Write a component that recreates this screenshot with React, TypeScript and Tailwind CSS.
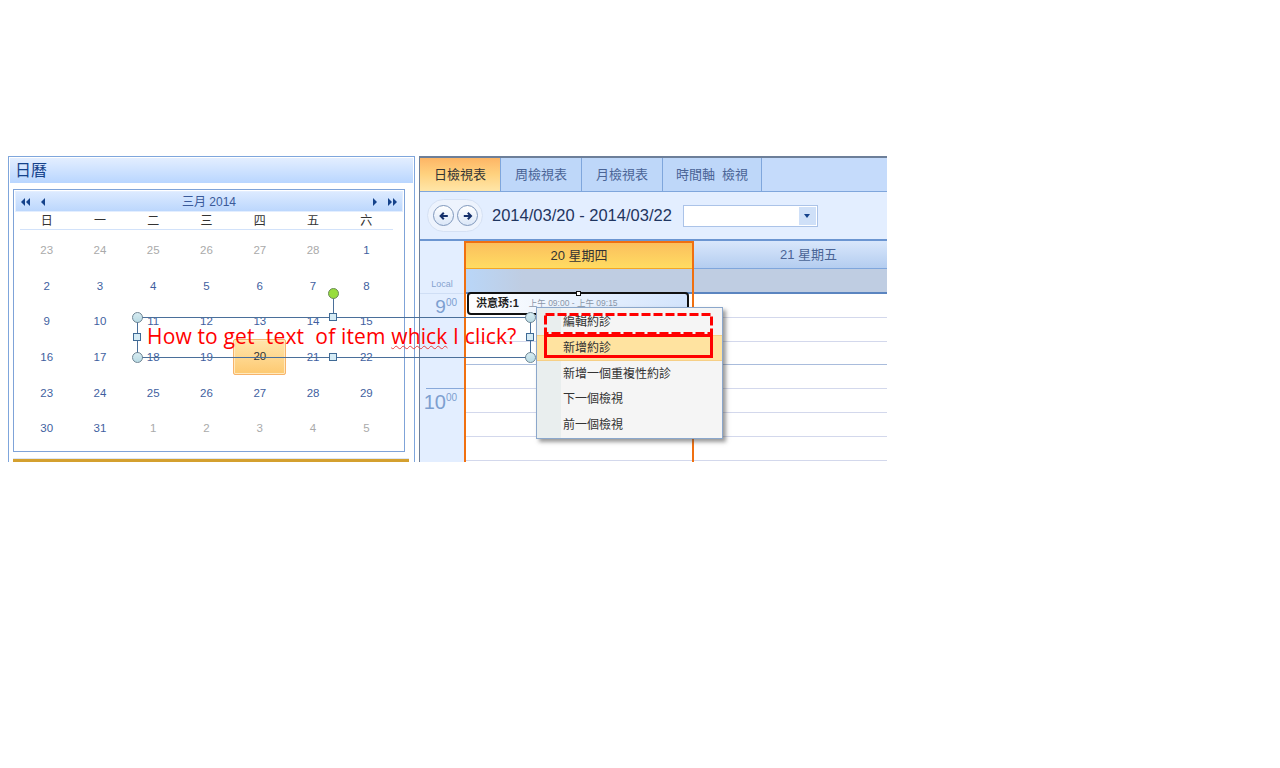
const FONT = "[font-family:'Liberation_Sans','Noto_Sans_CJK_TC',sans-serif]";

const WEEKDAYS = ["日", "一", "二", "三", "四", "五", "六"];

// day, muted
const DAYS: [number, boolean][] = [
  [23, true], [24, true], [25, true], [26, true], [27, true], [28, true], [1, false],
  [2, false], [3, false], [4, false], [5, false], [6, false], [7, false], [8, false],
  [9, false], [10, false], [11, false], [12, false], [13, false], [14, false], [15, false],
  [16, false], [17, false], [18, false], [19, false], [20, false], [21, false], [22, false],
  [23, false], [24, false], [25, false], [26, false], [27, false], [28, false], [29, false],
  [30, false], [31, false], [1, true], [2, true], [3, true], [4, true], [5, true],
];

const MENU = ["編輯約診", "新增約診", "新增一個重複性約診", "下一個檢視", "前一個檢視"];

const TABS = [
  { label: "周檢視表", width: "w-[81px]" },
  { label: "月檢視表", width: "w-[81px]" },
  { label: "時間軸  檢視", width: "w-[99px]" },
];

function Tri({ dir, double }: { dir: "l" | "r"; double?: boolean }) {
  const one = dir === "l" ? "M5 0 L5 8 L1 4 Z" : "M1 0 L1 8 L5 4 Z";
  const two = dir === "l" ? "M10 0 L10 8 L6 4 Z" : "M6 0 L6 8 L10 4 Z";
  return (
    <svg width={double ? 11 : 6} height="8" viewBox={double ? "0 0 11 8" : "0 0 6 8"} fill="#15428b">
      <path d={one} />
      {double && <path d={two} />}
    </svg>
  );
}

function Calendar() {
  return (
    <div className="w-[407px] h-full shrink-0 border border-[#7fa6dc] border-b-0 flex flex-col">
      <div className="h-[29px] border-b-2 border-[#8fb3e6] border border-white bg-gradient-to-b from-[#e3eeff] to-[#b9d6ff] flex items-center pl-[5px] pt-[1px] text-[16px] text-[#15428b]">
        日曆
      </div>
      <div className="flex-1 px-[4px] pt-[4px] flex flex-col">
        <div className="h-[263px] w-[392px] border border-[#7fa3d8] px-[1px] pt-[1px] flex flex-col">
          <div className="h-[21px] shrink-0 border border-[#e3eeff] bg-gradient-to-b from-[#dceaff] to-[#bcd7fd] flex items-center justify-between px-[4px] text-[12px] text-[#3a5a9a]">
            <div className="flex items-center gap-[9px]">
              <Tri dir="l" double />
              <Tri dir="l" />
            </div>
            <span>三月 2014</span>
            <div className="flex items-center gap-[9px]">
              <Tri dir="r" />
              <Tri dir="r" double />
            </div>
          </div>
          <div className="ml-[5px] w-[373px] grid grid-cols-7 h-[18px] pt-[1px] border-b border-[#d2e2fa] items-center text-center text-[12px] leading-none text-[#333333]">
            {WEEKDAYS.map((d) => (
              <span key={d}>{d}</span>
            ))}
          </div>
          <div className="ml-[5px] w-[373px] grid grid-cols-7 auto-rows-[35.6px] pt-[3px] text-[11.5px] text-center">
            {DAYS.map(([d, muted], i) => {
              const today = i === 25;
              return (
                <div key={i} className="flex items-center justify-center">
                  {today ? (
                    <div className="w-[53px] h-[36px] -mt-[1px] flex items-center justify-center rounded-[2px] border border-[#f7b36a] bg-gradient-to-b from-[#ffe6ad] to-[#fdc970] text-[#333333] shadow-[inset_0_0_0_1px_#ffe9bd]">
                      {d}
                    </div>
                  ) : (
                    <span className={muted ? "text-[#aaaaaa]" : "text-[#3f5f9f]"}>{d}</span>
                  )}
                </div>
              );
            })}
          </div>
        </div>
        <div className="mt-[6px] h-[4px] w-[396px] border-t border-[#dce6f4] bg-[#d4a02f]" />
      </div>
    </div>
  );
}

function ContextMenu() {
  return (
    <div className="absolute left-[116px] top-[149px] w-[187px] h-[132px] border border-[#8ba7cb] bg-[#f5f5f5] shadow-[3px_3px_4px_rgba(70,70,70,0.55)] flex flex-col pt-[1px]">
      <div className="absolute left-0 top-0 bottom-0 w-[24px] bg-[#e9eeee]" />
      {MENU.map((item, i) => (
        <div
          key={item}
          className={`relative h-[26px] pl-[26px] flex items-center text-[12px] text-[#333333] ${
            i === 1 ? "bg-[#ffe3a0] border-y border-[#f6cf86]" : ""
          }`}
        >
          {item}
        </div>
      ))}
    </div>
  );
}

function GridLines() {
  return (
    <>
      {Array.from({ length: 7 }, (_, i) => (
        <div
          key={i}
          className={`h-[23.8px] shrink-0 bg-white border-b ${i === 2 ? "border-[#a9bcdc]" : "border-[#d3d8ec]"}`}
        />
      ))}
    </>
  );
}

function Scheduler() {
  return (
    <div className="relative ml-[4px] w-[468px] h-full shrink-0 border-l border-t-2 border-[#6d7f99] flex flex-col overflow-hidden">
      {/* tabs */}
      <div className="h-[34px] shrink-0 flex bg-[#c5dbfb] border-b border-[#7fa6dc]">
        <div className="w-[81px] border-r border-[#7fa6dc] bg-gradient-to-b from-[#fdb565] via-[#ffd27f] to-[#ffe6a8] flex items-center justify-center text-[13px] text-[#333333]">
          日檢視表
        </div>
        {TABS.map((t) => (
          <div
            key={t.label}
            className={`${t.width} whitespace-pre border-r border-[#7fa6dc] bg-[#bed7f9] flex items-center justify-center text-[13px] text-[#4a6496]`}
          >
            {t.label}
          </div>
        ))}
      </div>
      {/* toolbar */}
      <div className="h-[49px] shrink-0 bg-[#e3eeff] border-b-2 border-[#6b95d1] flex items-center pl-[7px]">
        <div className="w-[56px] h-[33px] rounded-full bg-[#edf3fd] border border-[#d5e1f4] flex items-center justify-center gap-[3px]">
          {["M10 4 L6 8 L10 12 M6 8 L15 8", "M10 4 L14 8 L10 12 M5 8 L14 8"].map((d) => (
            <div key={d} className="w-[21px] h-[21px] rounded-full border border-[#7f97bb] bg-gradient-to-b from-white to-[#dbe7f8] flex items-center justify-center">
              <svg width="16" height="16" viewBox="0 0 20 16" fill="none" stroke="#15306b" strokeWidth="2.5">
                <path d={d} transform="translate(1 0)" />
              </svg>
            </div>
          ))}
        </div>
        <span className="ml-[9px] text-[16.5px] text-[#1f3560]">2014/03/20 - 2014/03/22</span>
        <div className="ml-[11px] w-[135px] h-[22px] border border-[#abc3e8] bg-white flex justify-end p-[1px]">
          <div className="w-[17px] bg-[#cfe0f8] flex items-center justify-center">
            <svg width="6" height="4" viewBox="0 0 6 4" fill="#15428b">
              <path d="M0 0 L6 0 L3 4 Z" />
            </svg>
          </div>
        </div>
      </div>
      {/* day grid */}
      <div className="flex-1 flex">
        <div className="w-[44px] shrink-0 bg-[#e3eeff] flex flex-col text-[#7d9fd0]">
          <div className="h-[53px] flex items-end justify-center pb-[2px] text-[9px] text-[#86a3cf] border-b border-[#cfdef5]">Local</div>
          <div className="h-[95px] border-b border-[#89a9da] ml-[6px] flex justify-end items-start pr-[7px] pt-[2px] text-[19px] leading-[22px]">
            9<span className="text-[10px] leading-[14px]">00</span>
          </div>
          <div className="flex justify-end items-start pr-[7px] pt-[2px] text-[20px] leading-[22px]">
            10<span className="text-[10px] leading-[14px]">00</span>
          </div>
        </div>
        <div className="relative w-[230px] shrink-0 border-x-2 border-t-2 border-[#f07010] flex flex-col">
          <div className="h-[26px] shrink-0 bg-gradient-to-b from-[#fbbf5d] to-[#ffdc62] border-b border-[#f5a623] flex items-center justify-center text-[13px] text-[#333333]">
            20 星期四
          </div>
          <div className="h-[25px] shrink-0 bg-gradient-to-r from-[#b9d6f8] via-[#bfcde2] via-25% to-[#bfcde2] border-b-2 border-[#5b85c0]" />
          <GridLines />
          <div className="absolute left-[1px] top-[49px] w-[222px] h-[23px] rounded-[4px] border-2 border-[#111111] bg-gradient-to-r from-white to-[#d3e4fc] flex items-center pl-[7px] gap-[10px]">
            <span className="text-[11px] font-bold text-[#222222]">洪意琇:1</span>
            <span className="text-[8.5px] text-[#8a96a8]">上午 09:00 - 上午 09:15</span>
          </div>
          <div className="absolute left-[110px] top-[48px] w-[5px] h-[5px] bg-white border border-[#111111]" />
        </div>
        <div className="flex-1 flex flex-col">
          <div className="h-[28px] shrink-0 bg-gradient-to-b from-[#d9e7fb] to-[#b4cdf0] border-b border-[#7fa6dc] flex items-center justify-center pl-[36px] text-[13px] text-[#4a6496]">
            21 星期五
          </div>
          <div className="h-[25px] shrink-0 bg-[#bfcde2] border-b-2 border-[#5b85c0]" />
          <GridLines />
        </div>
      </div>
      <ContextMenu />
    </div>
  );
}

function Handle({ x, y, round }: { x: number; y: number; round?: boolean }) {
  return round ? (
    <div className="absolute w-[11px] h-[11px] rounded-full border border-[#6f8695] bg-gradient-to-b from-[#d8ecf2] to-[#b9dbe4]" style={{ left: x - 5, top: y - 5 }} />
  ) : (
    <div className="absolute w-[8px] h-[8px] border border-[#3f6a95] bg-[#d5ebf5]" style={{ left: x - 4, top: y - 4 }} />
  );
}

// slide text box drawn on top of the screenshot
function Annotations() {
  return (
    <>
      <div className="absolute left-[137px] top-[317px] w-[394px] h-[41px] border border-[#4a6f9a] flex items-center pl-[9px] pb-[3px]">
        <span className="whitespace-pre text-[21px] leading-none text-[#ff0000] [font-family:'Open_Sans',sans-serif] tracking-[0.15px]">
          How to get  text  of item <span className="underline decoration-wavy decoration-[#e84040] decoration-1">whick</span> I click?
        </span>
      </div>
      <div className="absolute left-[333px] top-[298px] w-px h-[19px] bg-[#4a6f9a]" />
      <div className="absolute left-[328px] top-[288px] w-[11px] h-[11px] rounded-full border border-[#6c8a5a] bg-[#97dd3c]" />
      <Handle x={137} y={317} round />
      <Handle x={530} y={317} round />
      <Handle x={137} y={357} round />
      <Handle x={530} y={357} round />
      <Handle x={137} y={337} />
      <Handle x={530} y={337} />
      <Handle x={333} y={317} />
      <Handle x={333} y={357} />
      <svg className="absolute left-[543px] top-[312px]" width="171" height="24" fill="none" stroke="#ff0000" strokeWidth="3" strokeDasharray="9 3">
        <rect x="2.5" y="2.5" width="166" height="19" />
      </svg>
      <div className="absolute left-[544px] top-[334px] w-[169px] h-[24px] border-[3px] border-[#ff0000]" />
    </>
  );
}

export default function App() {
  return (
    <div className={`relative w-[1280px] h-[768px] bg-white overflow-hidden ${FONT}`}>
      <div className="pl-[8px] pt-[156px] h-[462px] flex">
        <Calendar />
        <Scheduler />
      </div>
      <Annotations />
    </div>
  );
}
